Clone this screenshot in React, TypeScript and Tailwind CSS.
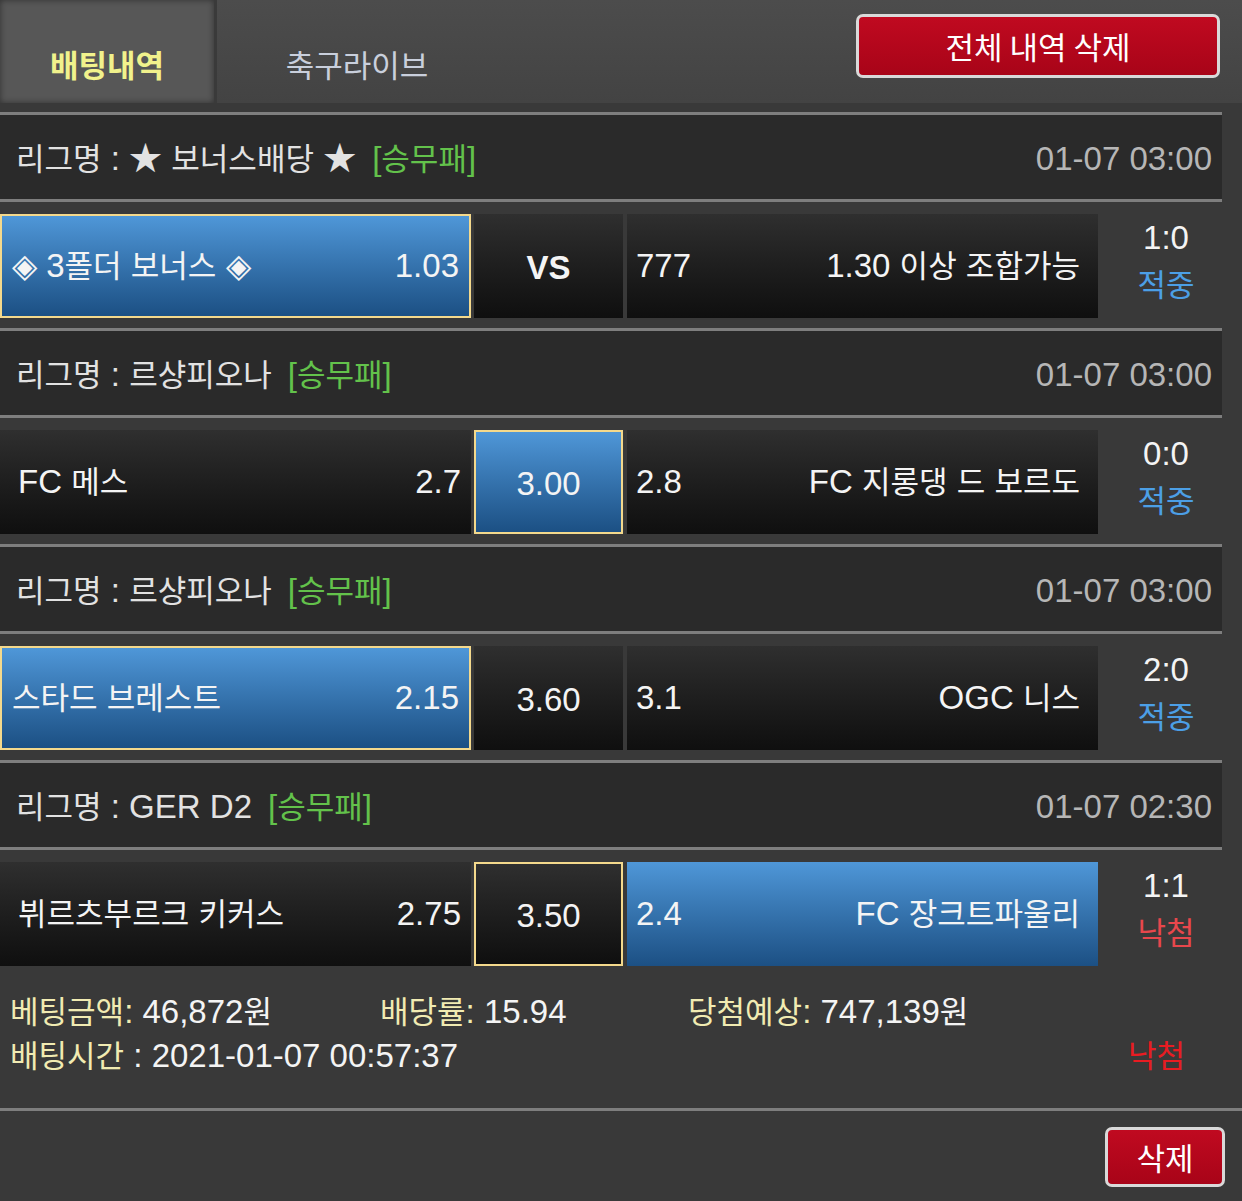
import type { ReactNode } from 'react';

type Pick = 'none' | 'picked' | 'outlined' | 'blue';

interface Side {
  name: string;
  odds: string;
  pick: Pick;
}

interface Match {
  league: string;
  time: string;
  home: Side;
  draw: { label: string; pick: Pick; bold?: boolean };
  away: Side;
  score: string;
  hit: boolean;
}

const matches: Match[] = [
  {
    league: '★ 보너스배당 ★',
    time: '01-07 03:00',
    home: { name: '◈ 3폴더 보너스 ◈', odds: '1.03', pick: 'picked' },
    draw: { label: 'VS', pick: 'none', bold: true },
    away: { name: '1.30 이상 조합가능', odds: '777', pick: 'none' },
    score: '1:0',
    hit: true,
  },
  {
    league: '르샹피오나',
    time: '01-07 03:00',
    home: { name: 'FC 메스', odds: '2.7', pick: 'none' },
    draw: { label: '3.00', pick: 'picked' },
    away: { name: 'FC 지롱댕 드 보르도', odds: '2.8', pick: 'none' },
    score: '0:0',
    hit: true,
  },
  {
    league: '르샹피오나',
    time: '01-07 03:00',
    home: { name: '스타드 브레스트', odds: '2.15', pick: 'picked' },
    draw: { label: '3.60', pick: 'none' },
    away: { name: 'OGC 니스', odds: '3.1', pick: 'none' },
    score: '2:0',
    hit: true,
  },
  {
    league: 'GER D2',
    time: '01-07 02:30',
    home: { name: '뷔르츠부르크 키커스', odds: '2.75', pick: 'none' },
    draw: { label: '3.50', pick: 'outlined' },
    away: { name: 'FC 장크트파울리', odds: '2.4', pick: 'blue' },
    score: '1:1',
    hit: false,
  },
];

// hangul comes from Noto, digits from Liberation Sans; nudge hangul down a bit
// so the two sit at about the same visual size.
function K({ children }: { children: string }) {
  const parts = children.split(/([\uac00-\ud7a3]+)/);
  return (
    <>
      {parts.map((p, i) =>
        /[\uac00-\ud7a3]/.test(p) ? (
          <span key={i} className="text-[0.94em]">{p}</span>
        ) : (
          p
        )
      )}
    </>
  );
}

function cellBg(pick: Pick) {
  const blue = pick === 'picked' || pick === 'blue';
  const bordered = pick === 'picked' || pick === 'outlined';
  return `${blue ? 'bg-linear-to-b from-[#4f97d8] to-[#1c5084]' : 'bg-linear-to-b from-[#2f2f2f] to-[#0f0f0f]'} ${
    bordered ? 'border-2 border-[#f4d98c]' : ''
  }`;
}

function Line({ full }: { full?: boolean }) {
  return <div className={`h-[3px] bg-[#7e7e7e] ${full ? 'w-full' : 'w-[1222px]'}`} />;
}

function RedButton({ children, className }: { children: ReactNode; className: string }) {
  return (
    <button
      className={`flex items-center justify-center rounded-[7px] border-[3px] border-[#d9d9d9] bg-linear-to-b from-[#c00a20] to-[#a80418] text-white text-[31px] font-['Noto_Sans_CJK_KR',sans-serif] ${className}`}
    >
      {children}
    </button>
  );
}

function MatchBlock({ m }: { m: Match }) {
  const homePicked = m.home.pick === 'picked';
  return (
    <div className="w-[1222px]">
      <Line />
      <div className="h-[84px] bg-[#2a2a2a] flex items-center justify-between pt-[4px] pl-[16px] pr-[10px]">
        <div className="flex items-center text-[#e2e2e2]">
          <span>
            <K>{`리그명 : ${m.league}`}</K>
          </span>
          <span className="ml-[16px] text-[#63c24b]">
            <K>[승무패]</K>
          </span>
        </div>
        <span className="text-[#b6b6b6]">{m.time}</span>
      </div>
      <Line />
      <div className="h-[126px] pt-[12px] pb-[10px] flex">
        <div
          className={`w-[471px] h-full flex items-center justify-between pr-[10px] ${
            homePicked ? 'pl-[10px]' : 'pl-[18px]'
          } ${cellBg(m.home.pick)}`}
        >
          <span>
            <K>{m.home.name}</K>
          </span>
          <span>{m.home.odds}</span>
        </div>
        <div
          className={`ml-[3px] w-[149px] h-full flex items-center justify-center pt-[4px] ${
            m.draw.bold ? 'font-bold' : ''
          } ${cellBg(m.draw.pick)}`}
        >
          {m.draw.label}
        </div>
        <div
          className={`ml-[4px] w-[471px] h-full flex items-center justify-between pl-[9px] pr-[18px] ${cellBg(
            m.away.pick
          )}`}
        >
          <span>{m.away.odds}</span>
          <span>
            <K>{m.away.name}</K>
          </span>
        </div>
        <div className="ml-[2px] flex-1 h-full flex flex-col items-center justify-center pl-[10px] pb-[10px] leading-[47px]">
          <span>{m.score}</span>
          <span className={m.hit ? 'text-[#4c9fe6]' : 'text-[#e8474c]'}>
            <K>{m.hit ? '적중' : '낙첨'}</K>
          </span>
        </div>
      </div>
    </div>
  );
}

export default function App() {
  return (
    <div className="w-[1242px] min-h-[1201px] bg-[#393939] text-[#f4f4f4] text-[33px] font-['Liberation_Sans','Noto_Sans_CJK_KR',sans-serif]">
      <div className="h-[103px] flex bg-linear-to-b from-[#4c4c4c] to-[#434343]">
        <div className="w-[217px] h-full flex items-end justify-center pb-[16px] bg-[#575757] border-r-[3px] border-[#3a3a3a] shadow-[inset_0_0_6px_rgba(0,0,0,0.45)]">
          <span className="text-[31px] font-bold text-[#f1f28c] font-['Noto_Sans_CJK_KR',sans-serif]">배팅내역</span>
        </div>
        <div className="w-[280px] h-full flex items-end justify-center pb-[16px]">
          <span className="text-[31px] text-[#c9cfdc] font-['Noto_Sans_CJK_KR',sans-serif]">축구라이브</span>
        </div>
        <RedButton className="ml-auto mr-[22px] mt-[14px] w-[364px] h-[64px]">전체 내역 삭제</RedButton>
      </div>
      <div className="h-[9px] bg-[#393939]" />

      {matches.map((m, i) => (
        <MatchBlock key={i} m={m} />
      ))}

      <div className="h-[132px] pt-[14px] pl-[10px] pr-[57px]">
        <div className="h-[44px] flex items-center">
          <span className="w-[370px]">
            <span className="text-[#f1ebb2]">
              <K>베팅금액:</K>
            </span>{' '}
            <K>46,872원</K>
          </span>
          <span className="w-[308px]">
            <span className="text-[#f1ebb2]">
              <K>배당률:</K>
            </span>{' '}
            15.94
          </span>
          <span>
            <span className="text-[#f1ebb2]">
              <K>당첨예상:</K>
            </span>{' '}
            <K>747,139원</K>
          </span>
        </div>
        <div className="h-[44px] flex items-center justify-between">
          <span>
            <span className="text-[#f1ebb2]">
              <K>배팅시간</K>
            </span>{' '}
            : 2021-01-07 00:57:37
          </span>
          <span className="text-[#e81c22]">
            <K>낙첨</K>
          </span>
        </div>
      </div>
      <Line full />
      <div className="h-[86px] flex justify-end">
        <RedButton className="mt-[16px] mr-[17px] w-[120px] h-[60px]">삭제</RedButton>
      </div>
    </div>
  );
}
